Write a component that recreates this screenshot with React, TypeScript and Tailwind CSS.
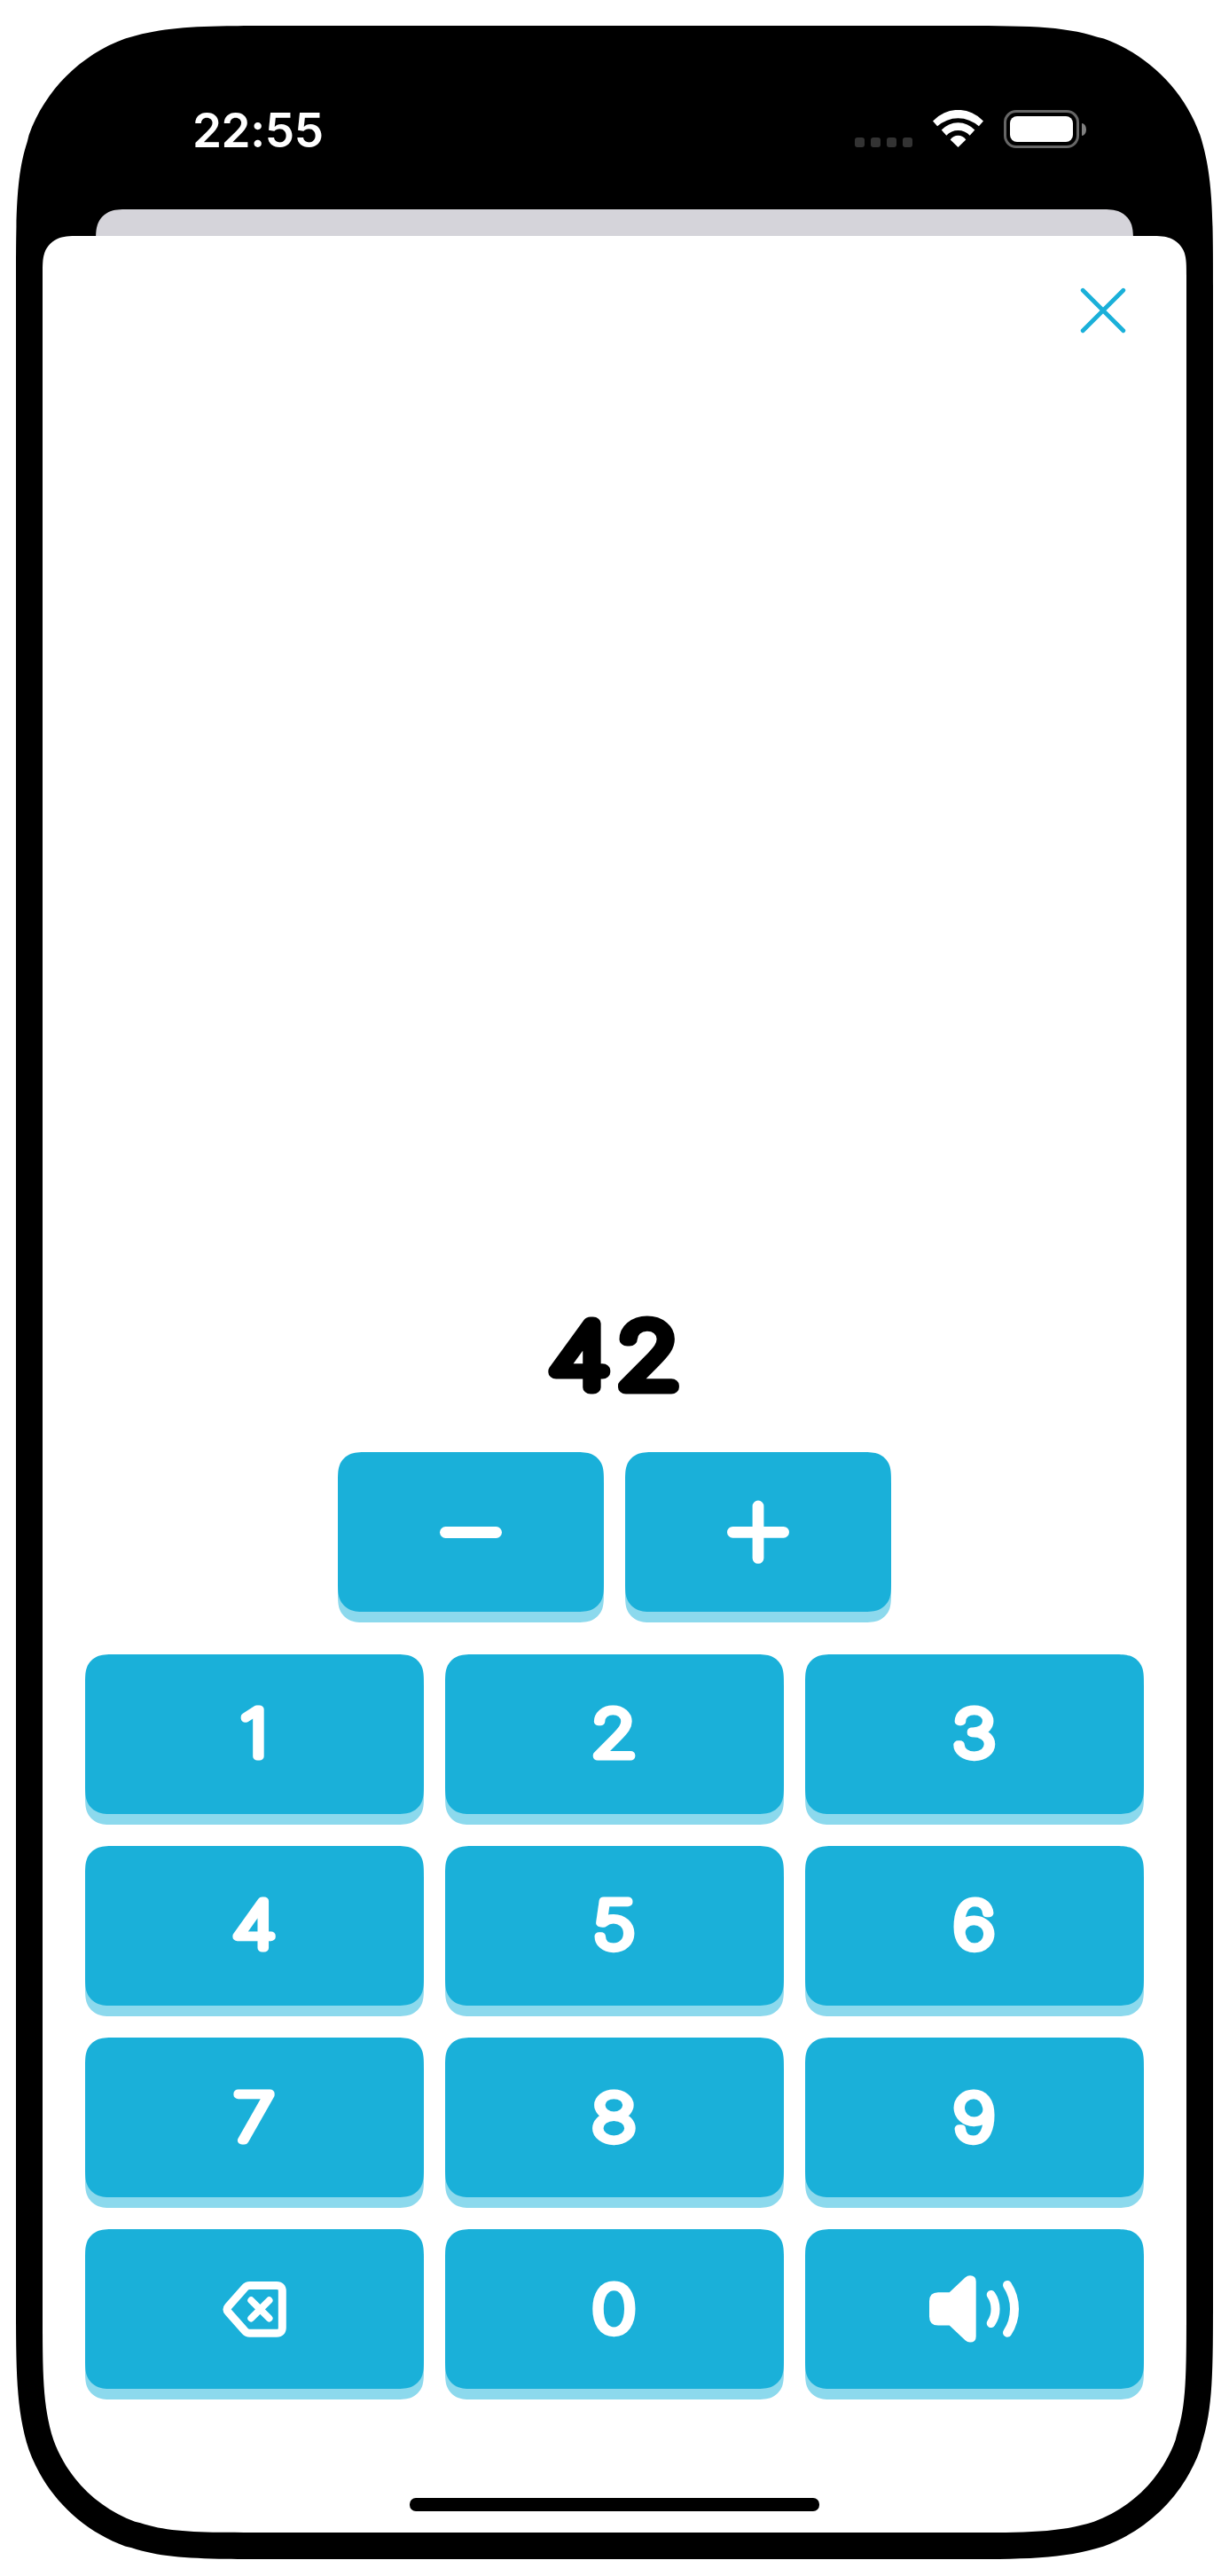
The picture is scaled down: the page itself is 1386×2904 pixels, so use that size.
import type { CSSProperties, ReactNode } from "react";

/** Path of a rectangle with continuous-curvature corners (tl, tr, br, bl radii). */
function smoothRect(w: number, h: number, radii: [number, number, number, number]): CSSProperties {
  const [tl, tr, br, bl] = radii;
  const a = 1.528665, b = 1.088493, c = 0.868407, d = 0.669934, e = 0.065496;
  const f = 0.631494, g = 0.074911, i = 0.372824, j = 0.169059;
  const path = [
    `M${a * tl} 0L${w - a * tr} 0`,
    `C${w - b * tr} 0 ${w - c * tr} 0 ${w - d * tr} ${e * tr}L${w - f * tr} ${g * tr}`,
    `C${w - i * tr} ${j * tr} ${w - j * tr} ${i * tr} ${w - g * tr} ${f * tr}`,
    `C${w} ${c * tr} ${w} ${b * tr} ${w} ${a * tr}L${w} ${h - a * br}`,
    `C${w} ${h - b * br} ${w} ${h - c * br} ${w - e * br} ${h - d * br}L${w - g * br} ${h - f * br}`,
    `C${w - j * br} ${h - i * br} ${w - i * br} ${h - j * br} ${w - f * br} ${h - g * br}`,
    `C${w - c * br} ${h} ${w - b * br} ${h} ${w - a * br} ${h}L${a * bl} ${h}`,
    `C${b * bl} ${h} ${c * bl} ${h} ${d * bl} ${h - e * bl}L${f * bl} ${h - g * bl}`,
    `C${i * bl} ${h - j * bl} ${j * bl} ${h - i * bl} ${g * bl} ${h - f * bl}`,
    `C0 ${h - c * bl} 0 ${h - b * bl} 0 ${h - a * bl}L0 ${a * tl}`,
    `C0 ${b * tl} 0 ${c * tl} ${e * tl} ${d * tl}L${g * tl} ${f * tl}`,
    `C${j * tl} ${i * tl} ${i * tl} ${j * tl} ${f * tl} ${g * tl}`,
    `C${c * tl} 0 ${b * tl} 0 ${a * tl} 0Z`,
  ].join("");
  return { clipPath: `path("${path}")` };
}

function Key({ label, width, children }: { label: string; width: number; children: ReactNode }) {
  const shape = { ...smoothRect(width, 180, [24, 24, 24, 24]), width };
  return (
    <button type="button" aria-label={label} className="relative block h-[180px]">
      <span className="absolute left-0 top-3 h-[180px] bg-[#8cd9ed]" style={shape} />
      <span className="relative flex h-[180px] items-center justify-center bg-[#1ab0d9] text-white" style={shape}>
        {children}
      </span>
    </button>
  );
}

/** A numeral with rounded stroke ends. */
function Digit({ children, baseline = 115.2 }: { children: string; baseline?: number }) {
  return (
    <svg className="h-[180px] w-[80px] text-[72px] font-thin" viewBox="-40 0 80 180">
      <text
        transform={`translate(-0.5 ${baseline}) scale(1.17 1)`}
        textAnchor="middle"
        fill="white"
        stroke="white"
        strokeWidth="9"
        strokeLinejoin="round"
      >
        {children}
      </text>
    </svg>
  );
}

function StatusBar() {
  return (
    <header className="flex h-[177px] shrink-0 items-start justify-between pl-[169px] pr-[113px] pt-[61px] text-white">
      <time className="text-[53px] font-semibold leading-[54px] tracking-[-0.4px]">22:55</time>
      <div className="flex items-end pt-1">
        <div className="mr-[23px] flex gap-[7px] pb-px">
          <i className="size-[11px] rounded-[3px] bg-[#333]" />
          <i className="size-[11px] rounded-[3px] bg-[#333]" />
          <i className="size-[11px] rounded-[3px] bg-[#333]" />
          <i className="size-[11px] rounded-[3px] bg-[#333]" />
        </div>
        <svg className="mb-px mr-[23px] h-[42px] w-[57px]" viewBox="0 0 57 42" fill="white">
          <path d="M0 12.4A38.7 38.7 0 0 1 57 12.4L51.9 18.3A35 35 0 0 0 5.1 18.3Z" />
          <path d="M9.7 22.6A25.2 25.2 0 0 1 47.3 22.6L41.7 28.8A18.1 18.1 0 0 0 15.3 28.8Z" />
          <path d="M19.7 33.6A10.5 10.5 0 0 1 37.3 33.6L28.5 42Z" />
        </svg>
        <div className="mr-[3px] h-[43px] w-[85px] rounded-[14px] border-[3px] border-[#666] p-1">
          <div className="h-full w-full rounded-[8px] bg-white" />
        </div>
        <i className="mb-[14px] h-[14px] w-[5px] bg-[#808080] [border-radius:0_5px_5px_0/0_7px_7px_0]" />
      </div>
    </header>
  );
}

function CloseIcon() {
  return (
    <svg className="size-[52px]" viewBox="0 0 52 52" fill="none" stroke="#1ab0d9" strokeWidth="4.8" strokeLinecap="round">
      <path d="M3.2 3.2L48.8 48.8M48.8 3.2L3.2 48.8" />
    </svg>
  );
}

function DeleteIcon() {
  return (
    <svg className="-ml-[1px] h-[64px] w-[72px]" viewBox="0 0 72 64" fill="none" stroke="white" strokeLinecap="round" strokeLinejoin="round">
      <path strokeWidth="9" d="M30.5 5.6H61Q67.3 5.6 67.3 11.9V53Q67.3 59.2 61 59.2H30.5Q27.5 59.2 25 56.6L6.6 35.8Q3.6 32.4 6.6 29L25 8.2Q27.5 5.6 30.5 5.6Z" />
      <path strokeWidth="7.8" d="M32.2 22.2L52.6 42.6M52.6 22.2L32.2 42.6" />
    </svg>
  );
}

function SpeakerIcon() {
  return (
    <svg className="h-[76px] w-[102px]" viewBox="0 0 102 76" fill="none" stroke="white" strokeWidth="10" strokeLinecap="round">
      <path stroke="none" fill="white" d="M10 19.3H22.7L40.5 2.6Q43 .3 46 .3Q52.7 .3 52.7 7V69Q52.7 75.6 46 75.6Q43 75.6 40.5 73.3L22.7 56.4H10Q0 56.4 0 46.4V29.3Q0 19.3 10 19.3Z" />
      <path d="M69.7 22C76.2 31.5 76.2 44.5 69.7 54" />
      <path d="M88 11C98.7 27.5 98.7 48.5 88 64.7" />
    </svg>
  );
}

export default function App() {
  return (
    <main className="h-[2904px] w-[1386px] bg-white px-[18px] pt-[29px] font-['Inter',sans-serif]">
      <div className="h-[2856px] w-[1350px] bg-black p-[30px]" style={smoothRect(1350, 2856, [195, 195, 195, 195])}>
        <div className="flex h-[2796px] w-[1290px] flex-col">
          <StatusBar />
          <div className="mx-[60px] h-[30px] shrink-0 overflow-hidden">
            <div className="h-[80px] bg-[#d5d4da]" style={smoothRect(1170, 80, [27, 27, 0, 0])} />
          </div>
          <section className="flex h-[2589px] flex-col bg-white" style={smoothRect(1290, 2589, [30, 30, 165, 165])}>
            <div className="flex justify-end pr-[68.5px] pt-[58.4px]">
              <button type="button" aria-label="Close">
                <CloseIcon />
              </button>
            </div>
            <svg className="mx-auto mb-[30px] mt-auto h-[140px] w-[300px] shrink-0 text-[99px] font-thin tracking-[6px]" viewBox="0 0 300 140">
              <text
                transform="translate(153.6 97) scale(1.18 1)"
                textAnchor="middle"
                stroke="black"
                strokeWidth="15"
                strokeLinejoin="round"
              >
                42
              </text>
            </svg>
            <div className="flex justify-center gap-6">
              <Key label="Decrease" width={300}>
                <i className="h-[13px] w-[70px] rounded-full bg-white" />
              </Key>
              <Key label="Increase" width={300}>
                <svg className="size-[72px]" viewBox="0 0 72 72" stroke="white" strokeWidth="12.8" strokeLinecap="round">
                  <path d="M7.4 36.3H64.6M36 7V65.4" />
                </svg>
              </Key>
            </div>
            <div className="mt-12 grid grid-cols-[382px_382px_382px] justify-center gap-x-6 gap-y-9">
              {["1", "2", "3", "4", "5", "6"].map((n) => (
                <Key key={n} label={n} width={382}>
                  <Digit>{n}</Digit>
                </Key>
              ))}
              {["7", "8", "9"].map((n) => (
                <Key key={n} label={n} width={382}>
                  <Digit baseline={116.2}>{n}</Digit>
                </Key>
              ))}
              <Key label="Delete" width={382}>
                <DeleteIcon />
              </Key>
              <Key label="0" width={382}>
                <Digit baseline={116.2}>0</Digit>
              </Key>
              <Key label="Speak" width={382}>
                <SpeakerIcon />
              </Key>
            </div>
            <div className="mx-auto mb-6 mt-[123px] h-[15px] w-[462px] shrink-0 rounded-[7px] bg-black" />
          </section>
        </div>
      </div>
    </main>
  );
}
